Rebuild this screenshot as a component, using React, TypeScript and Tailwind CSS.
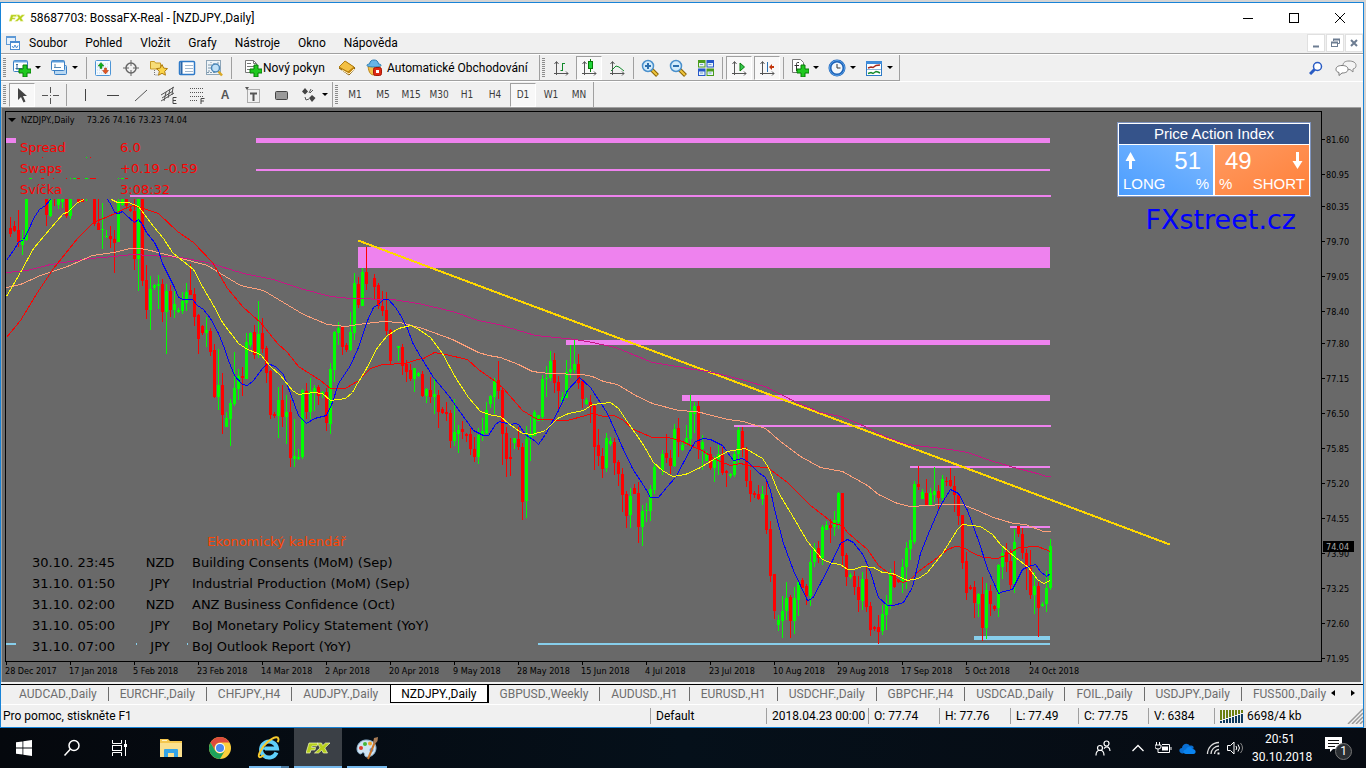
import React from 'react';

interface ZoneItem {
    x: number;
    y: number;
    w: number;
    h: number;
    fill: string;
}

// x, colour, high, body top, body bottom, low
const candleData = `
10 r 217 228 234 237,14 r 221 226 231 232,18 r 210 230 242 247,22 g 230 239 245 255,26 g 199 199 240 241
46 r 199 199 215 226,50 g 199 199 216 217,54 r 199 199 199 206,58 g 199 199 205 209,62 g 199 199 202 208
66 r 199 199 216 218,70 g 199 199 216 219,78 r 199 199 203 203,82 r 199 199 202 202,86 g 199 199 199 201
94 r 199 199 224 226,98 r 199 223 230 230,102 g 203 229 230 249,106 g 230 236 237 238,110 r 226 236 239 248
114 r 230 239 243 273,118 g 199 201 242 242,122 g 199 199 205 206,126 r 199 199 206 208,130 r 207 209 211 212
134 r 199 211 259 270,138 g 199 199 259 291,142 r 199 199 281 286,146 r 265 280 310 319,150 g 276 289 310 330
154 g 284 285 288 290,158 g 275 284 286 309,162 r 279 284 312 322,166 g 284 291 312 354,170 r 285 291 310 317
174 g 291 304 310 318,178 g 308 310 312 313,182 g 292 301 311 314,186 g 283 292 303 311,190 r 264 290 295 295
194 r 288 294 317 326,198 r 314 315 339 354,202 r 325 326 333 335,206 g 317 330 333 347,210 r 328 331 352 356
214 r 344 350 397 398,218 g 349 385 397 410,222 r 373 385 415 434,226 g 412 418 427 427,230 g 399 403 419 446
234 g 352 388 404 406,238 g 369 376 389 400,242 r 367 376 378 396,246 g 333 342 379 379,250 g 332 333 345 347
254 r 325 332 355 359,258 g 301 334 355 358,262 r 318 333 349 353,266 r 346 348 373 383,270 r 370 371 415 419
274 r 412 414 416 418,278 g 387 400 416 438,282 r 385 400 417 427,286 g 395 412 417 444,290 r 400 412 458 467
294 g 419 456 459 467,298 g 449 457 459 460,302 g 389 390 457 459,306 r 383 391 412 419,310 g 378 391 412 419
314 g 385 388 392 411,318 r 385 387 396 405,322 g 391 392 394 398,326 r 388 392 423 431,330 g 363 369 424 434
334 g 331 332 370 382,338 g 322 328 333 345,342 r 326 327 347 355,346 r 343 345 350 352,350 g 312 332 350 351
354 g 273 283 333 340,358 r 277 284 305 308,362 g 268 272 306 306,366 r 247 272 284 290,374 r 274 278 287 299
378 r 283 285 306 309,382 r 291 306 311 316,386 r 292 310 331 335,390 r 329 330 361 364,398 g 346 346 348 361
402 r 344 347 366 375,406 r 360 364 372 382,410 r 364 370 379 381,414 g 368 368 379 392,418 g 372 373 376 377
422 r 371 374 396 397,426 g 388 389 396 403,430 r 377 390 397 403,434 g 379 394 397 414,438 r 390 395 412 428
442 r 407 409 413 414,446 r 402 412 414 421,450 r 410 413 441 448,454 g 399 432 441 446,458 g 425 430 434 453
462 r 421 429 432 439,466 r 433 434 436 442,470 r 428 434 449 455,474 r 437 449 457 462,478 g 428 435 457 464
482 g 418 431 435 441,486 g 402 410 433 434,490 g 395 396 404 408,494 g 378 380 397 414,498 r 361 380 391 399
502 r 388 390 434 465,506 r 427 433 459 477,510 r 438 457 459 476,514 g 438 438 443 449,518 r 427 439 447 450
522 r 443 447 502 520,526 g 426 439 501 518,530 g 417 434 439 461,534 g 410 412 436 436,538 g 415 415 421 421
542 g 375 379 417 421,546 g 366 378 379 397,550 g 351 361 378 381,554 r 353 360 383 393,558 r 376 382 391 412
562 g 392 397 402 402,566 g 360 372 398 398,570 g 345 369 372 378,574 g 340 364 370 373,578 r 354 364 383 389
582 r 379 381 399 408,586 g 398 400 404 405,590 r 395 402 407 423,594 r 405 406 447 470,598 r 429 445 456 466
602 r 448 456 469 478,606 g 433 438 468 472,610 g 437 441 444 446,614 r 438 442 463 475,618 r 460 462 474 486
622 r 468 474 495 512,626 r 491 494 516 528,630 g 488 496 515 528,634 r 484 488 494 494,638 r 482 493 527 543
642 g 505 511 527 546,646 g 503 510 511 522,650 g 485 489 511 521,654 g 464 467 490 494,662 g 450 454 470 475
666 r 434 453 458 463,670 r 450 458 466 474,674 g 424 429 466 467,678 r 418 428 442 457,682 g 441 445 450 451
686 g 425 438 445 445,690 g 395 412 439 447,694 g 402 406 414 433,698 r 401 406 449 459,702 g 435 442 449 470
706 g 451 454 461 461,710 r 447 454 468 470,714 g 456 459 468 482,718 g 445 454 459 475,722 r 447 455 473 475
726 r 470 471 473 487,730 g 473 474 476 478,734 g 451 454 475 477,738 g 427 430 454 465,742 r 427 431 449 457
746 r 447 449 481 487,750 r 470 481 494 502,754 r 491 493 495 498,758 r 485 494 499 500,762 g 486 494 499 505
766 r 482 495 530 534,770 r 521 529 576 582,774 r 574 574 611 619,778 g 615 620 625 631,782 g 596 611 621 638
786 g 582 598 611 620,790 r 595 597 621 638,794 g 587 598 621 634,798 g 580 582 600 616,802 r 578 580 588 588
806 r 584 586 596 605,810 g 550 562 596 606,814 g 543 548 562 567,818 r 541 548 558 563,822 g 525 527 558 565
826 g 521 525 530 530,830 r 519 525 528 543,834 g 511 520 527 536,838 g 492 493 522 529,842 r 493 493 556 568
846 r 553 555 577 586,850 g 573 575 577 579,854 r 571 576 587 595,858 r 576 587 600 612,862 g 572 579 601 610
866 r 567 579 607 612,870 r 602 606 630 636,874 r 626 627 629 631,878 r 615 627 632 644,882 g 605 614 631 635
886 g 595 604 615 630,890 g 569 573 604 609,894 r 561 575 587 588,898 r 579 580 582 583,902 g 559 567 582 593
906 g 542 548 567 589,910 g 530 540 549 560,914 g 481 484 542 544,918 r 466 484 487 490,922 g 489 492 499 499
926 r 479 493 505 505,930 g 488 493 505 506,934 g 467 491 495 502,938 r 485 491 498 509,942 g 475 479 498 501
946 r 477 481 482 486,950 r 468 480 486 487,954 r 476 486 495 512,958 r 493 495 516 525,962 r 515 515 563 569
966 r 552 561 593 600,970 r 585 587 589 590,974 r 581 587 603 618,978 g 593 594 604 617,982 r 577 594 628 641
986 g 583 590 628 639,990 r 585 591 604 616,994 r 605 606 609 611,998 g 564 565 608 617,1002 g 547 553 567 579
1006 r 543 552 562 572,1010 r 549 561 585 589,1014 g 529 542 584 593,1018 r 526 526 534 537,1022 r 528 534 553 559
1026 r 549 553 568 590,1030 r 550 568 595 599,1034 g 572 586 595 614,1038 r 582 586 608 637,1042 g 602 604 606 607
1046 g 571 588 604 612,1050 g 539 546 588 590`;

const candles = candleData.trim().split(/[\n,]/).map((row) => {
    const [x, c, high, top, bottom, low] = row.trim().split(' ');
    return { x: +x, color: c === 'g' ? '#00ff00' : '#ff0000', high: +high, top: +top, bottom: +bottom, low: +low };
});

const averages = [
    {
        color: '#c71585',
        points: ['6,272 27,270 50,264 90,258 113,256 133,254 150,255 180,257 207,262 243,273 273,279 300,288 330,296 350,298 392,299 418,303 452,311 478,320 498,324 535,335 575,339 592,342 615,347 652,362 694,369 712,372 745,380 767,387 790,399 820,412 840,416 860,424 887,437 907,444 950,449 967,452 993,461 1017,468 1037,473 1046,476 1050,476'],
    },
    {
        color: '#ffa07a',
        points: ['6,287 20,284 40,275 67,266 92,255 113,252 130,248 140,248 150,250 177,257 207,265 220,273 240,285 263,290 283,302 303,314 327,324 345,326 365,323 383,321 400,322 422,328 452,339 478,352 488,355 500,357 518,364 532,371 548,373 582,374 592,376 603,381 617,384 635,395 652,403 678,410 694,411 700,412 727,419 743,421 765,428 780,441 800,456 820,467 842,471 867,485 878,494 897,503 910,506 943,504 962,504 977,510 993,517 1013,523 1025,524 1043,531 1050,531'],
    },
    {
        color: '#ff0000',
        points: ['6,337 20,320 37,292 53,268 77,238 93,222 110,215 127,207 133,205 143,208 158,213 177,231 193,242 212,262 227,288 243,307 260,322 277,343 287,352 298,366 320,380 330,388 345,388 358,380 370,368 382,364 405,363 417,359 423,358 434,352 445,354 467,359 478,369 495,381 503,388 522,410 537,419 567,420 585,415 592,413 603,416 613,415 622,419 633,429 652,437 668,437 682,441 694,447 702,450 715,459 730,465 740,463 752,466 767,467 787,482 810,505 823,515 833,523 842,525 847,532 867,549 878,565 890,574 902,582 910,579 918,571 937,557 947,549 955,546 963,547 973,553 983,557 997,558 1007,554 1018,547 1037,546 1050,551'],
    },
    {
        color: '#0000ff',
        points: [
            '6,260 13,250 18,242 23,239 28,230 33,218 39,209 45,205 50,199',
            '107,199 111,205 114,212 118,213 122,211 126,215 134,222 138,219 142,224 146,232 154,242 158,250 162,263 166,271 170,279 174,287 178,297 183,299 192,299 197,305 203,309 210,318 218,333 224,348 228,360 234,375 242,384 247,385 253,380 262,368 267,363 275,366 283,374 290,393 298,415 306,423 314,418 326,415 332,402 338,383 346,371 350,365 358,347 367,320 373,307 378,304 383,299 388,299 395,307 399,313 407,328 412,342 420,356 433,377 448,395 460,412 473,430 483,435 488,435 495,424 499,421 510,424 515,423 518,424 525,434 535,441 538,444 545,434 558,410 567,390 579,377 590,387 607,413 622,447 632,468 645,488 650,497 658,497 667,486 675,477 690,449 695,441 703,438 710,439 722,445 733,460 742,458 748,462 758,472 765,477 770,490 775,513 783,543 793,570 807,600 812,598 820,583 832,560 840,543 847,539 853,542 863,555 870,572 878,597 887,605 893,605 903,602 912,587 920,553 928,533 940,505 950,489 958,493 967,510 978,540 987,568 998,593 1003,591 1012,589 1022,569 1028,566 1035,564 1040,571 1046,576 1050,573',
        ],
    },
    {
        color: '#ffff00',
        points: [
            '6,296 20,272 33,248 50,228 63,213 67,212 77,202 84,199',
            '111,199 117,202 128,202 138,206 153,226 163,238 172,252 178,257 193,269 203,288 213,305 222,322 238,343 247,349 260,354 270,366 280,375 292,390 298,394 313,392 322,393 330,400 345,398 352,392 357,383 365,370 377,347 387,335 398,328 410,325 417,328 430,337 442,353 455,377 468,397 480,411 492,415 500,416 508,423 522,433 532,434 545,430 557,418 568,413 583,410 592,404 610,402 618,408 628,423 642,443 653,462 662,470 672,476 685,474 700,467 713,459 727,451 745,448 762,458 768,467 778,492 790,512 807,541 822,559 832,563 840,564 847,569 853,569 862,566 873,567 882,572 892,573 907,580 918,578 927,572 942,553 957,529 962,524 980,526 992,534 1000,544 1015,557 1028,567 1037,579 1043,583 1050,580',
        ],
    },
];

const zones: ZoneItem[] = [
    { x: 6, y: 138, w: 10, h: 5, fill: '#ee82ee' },
    { x: 256, y: 138, w: 794, h: 5, fill: '#ee82ee' },
    { x: 256, y: 169, w: 794, h: 2, fill: '#ee82ee' },
    { x: 130, y: 195, w: 921, h: 2, fill: '#ee82ee' },
    { x: 358, y: 247, w: 692, h: 21, fill: '#ee82ee' },
    { x: 566, y: 340, w: 484, h: 5, fill: '#ee82ee' },
    { x: 682, y: 395, w: 368, h: 6, fill: '#ee82ee' },
    { x: 734, y: 425, w: 317, h: 2, fill: '#ee82ee' },
    { x: 910, y: 466, w: 140, h: 2, fill: '#ee82ee' },
    { x: 1010, y: 526, w: 40, h: 2, fill: '#ee82ee' },
    { x: 974, y: 636, w: 76, h: 4, fill: '#87ceeb' },
    { x: 538, y: 643, w: 512, h: 2, fill: '#87ceeb' },
    { x: 6, y: 643, w: 10, h: 2, fill: '#87ceeb' },
    { x: 136, y: 643, w: 1, h: 2, fill: '#87ceeb' },
    { x: 187, y: 643, w: 1, h: 2, fill: '#87ceeb' },
];

// bits of candles left between the info lines
const specks: ZoneItem[] = [
    { x: 42, y: 157, w: 1, h: 1, fill: '#ff0000' },
    { x: 86, y: 157, w: 1, h: 1, fill: '#00ff00' },
    { x: 90, y: 157, w: 1, h: 1, fill: '#ff0000' },
    { x: 29, y: 178, w: 3, h: 1, fill: '#00ff00' },
    { x: 41, y: 178, w: 3, h: 1, fill: '#ff0000' },
    { x: 53, y: 178, w: 1, h: 1, fill: '#ff0000' },
    { x: 66, y: 178, w: 1, h: 1, fill: '#ff0000' },
    { x: 70, y: 178, w: 1, h: 1, fill: '#00ff00' },
    { x: 73, y: 178, w: 3, h: 1, fill: '#00ff00' },
    { x: 77, y: 178, w: 3, h: 1, fill: '#ff0000' },
    { x: 85, y: 178, w: 3, h: 1, fill: '#00ff00' },
    { x: 90, y: 178, w: 6, h: 1, fill: '#ff0000' },
    { x: 118, y: 178, w: 1, h: 1, fill: '#00ff00' },
    { x: 121, y: 178, w: 3, h: 1, fill: '#00ff00' },
    { x: 125, y: 178, w: 3, h: 1, fill: '#ff0000' },
];

const prices = ['81.60', '80.95', '80.35', '79.70', '79.05', '78.40', '77.80', '77.15', '76.50', '75.85', '75.20', '74.55', '73.90', '73.25', '72.60', '71.95'];
const priceY = (price: string) => Math.round(139 + (81.6 - Number(price)) * 53.78);

const dates = ['28 Dec 2017', '17 Jan 2018', '5 Feb 2018', '23 Feb 2018', '14 Mar 2018', '2 Apr 2018', '20 Apr 2018', '9 May 2018', '28 May 2018', '15 Jun 2018', '4 Jul 2018', '23 Jul 2018', '10 Aug 2018', '29 Aug 2018', '17 Sep 2018', '5 Oct 2018', '24 Oct 2018'];

const menu = ['Soubor', 'Pohled', 'Vložit', 'Grafy', 'Nástroje', 'Okno', 'Nápověda'];

const frames = ['M1', 'M5', 'M15', 'M30', 'H1', 'H4', 'D1', 'W1', 'MN'];

const tabs = ['AUDCAD.,Daily', 'EURCHF.,Daily', 'CHFJPY.,H4', 'AUDJPY.,Daily', 'NZDJPY.,Daily', 'GBPUSD.,Weekly', 'AUDUSD.,H1', 'EURUSD.,H1', 'USDCHF.,Daily', 'GBPCHF.,H4', 'USDCAD.,Daily', 'FOIL.,Daily', 'USDJPY.,Daily', 'FUS500.,Daily'];

const events = [
    { time: '30.10. 23:45', currency: 'NZD', name: 'Building Consents (MoM) (Sep)' },
    { time: '31.10. 01:50', currency: 'JPY', name: 'Industrial Production (MoM) (Sep)' },
    { time: '31.10. 02:00', currency: 'NZD', name: 'ANZ Business Confidence (Oct)' },
    { time: '31.10. 05:00', currency: 'JPY', name: 'BoJ Monetary Policy Statement (YoY)' },
    { time: '31.10. 07:00', currency: 'JPY', name: 'BoJ Outlook Report (YoY)' },
];

const info = [
    { label: 'Spread', value: '6.0' },
    { label: 'Swaps', value: '+0.19 -0.59' },
    { label: 'Svíčka', value: '3:08:32' },
];

function classNames(...classes: string[]) {
    return classes.filter(Boolean).join(' ')
}

const Icon = ({ children, size = 18 }: { children: React.ReactNode; size?: number }) => (
    <svg width={size} height={size} viewBox={`0 0 ${size} ${size}`} fill="none" className="shrink-0" aria-hidden="true">
        {children}
    </svg>
)

const Caret = () => (
    <svg width="6" height="3" viewBox="0 0 6 3" className="shrink-0" aria-hidden="true">
        <path d="M0 0h6L3 3z" fill="#000" />
    </svg>
)

const Grip = () => (
    <span className="flex w-[7px] shrink-0 items-center justify-center">
        <svg width="3" height="20" viewBox="0 0 3 20" shapeRendering="crispEdges" aria-hidden="true">
            <path d="M1.5 0v20" stroke="#8c8c8c" strokeWidth="3" strokeDasharray="1 1" />
        </svg>
    </span>
)

const Separator = () => (
    <span className="flex w-[5px] shrink-0 items-center justify-center">
        <span className="h-[22px] w-px bg-[#a0a0a0]" />
    </span>
)

const Tool = ({ label, pressed, children }: { label: string; pressed?: boolean; children: React.ReactNode }) => (
    <button
        type="button"
        aria-label={label}
        className={classNames(
            pressed ? 'border-[#a0a0a0] border-r-white border-b-white bg-[#f8f8f8]' : 'border-transparent',
            'mx-px flex h-6 w-[26px] shrink-0 items-center justify-center border'
        )}
    >
        {children}
    </button>
)

const SplitTool = ({ label, children }: { label: string; children: React.ReactNode }) => (
    <button type="button" aria-label={label} className="flex h-6 w-[37px] shrink-0 items-center justify-center gap-1">
        {children}
        <Caret />
    </button>
)

const Plus = () => (
    <path d="M10 6h4v4h4v4h-4v4h-4v-4H6v-4h4z" fill="#1fc91f" stroke="#087a08" strokeWidth="1" />
)

const Axes = () => (
    <path d="M4.5 3v13M2 14.5h14M2.5 5l2-2.5 2 2.5M14 12.5l2 2-2 2" stroke="#555" />
)

const Magnifier = ({ plus }: { plus?: boolean }) => (
    <Icon>
        <path d="M10.5 10.5l6 6" stroke="#8a6508" strokeWidth="4" />
        <path d="M10.5 10.5l5.5 5.5" stroke="#f0c63c" strokeWidth="2" />
        <circle cx="7" cy="7" r="5.5" fill="#d3ecfb" stroke="#4a90cc" strokeWidth="1.5" />
        <path d={plus ? 'M4 7h6M7 4v6' : 'M4 7h6'} stroke="#2c6fae" strokeWidth="2" />
    </Icon>
)

const FxLogo = ({ width, height }: { width: number; height: number }) => (
    <svg width={width} height={height} viewBox="0 0 24 12" aria-hidden="true">
        <path d="M3 1h9l-1 3H6l-.4 1.5h4L9 8H5l-1 3H0z" fill="#b6cf1c" stroke="#f4f9c0" strokeWidth=".7" />
        <path d="M11.5 1h4l1.2 2.5L19.5 1H24l-5.2 5L21.5 11h-4.2l-1.5-2.8L12.5 11H8.5l5.5-5z" fill="#b6cf1c" stroke="#f4f9c0" strokeWidth=".7" />
    </svg>
)

const MainToolbar = () => (
    <div className="flex h-[27px] items-stretch border-b border-white">
        <div className="flex items-center border-r border-b border-[#a0a0a0]">
            <Grip />
            <SplitTool label="Nový graf">
                <Icon>
                    <rect x=".5" y="1.5" width="14" height="11" rx="1" fill="#fff" stroke="#3a7fc4" />
                    <path d="M1 2.5h13" stroke="#6aa7e0" strokeWidth="2" />
                    <path d="M4 5v6M2.5 9.5h7M3 6l1-1 1 1" stroke="#356b9c" />
                    <Plus />
                </Icon>
            </SplitTool>
            <SplitTool label="Profily">
                <Icon>
                    <rect x="4.5" y="6.5" width="12" height="9" rx="1" fill="#b9d8f2" stroke="#3a7fc4" />
                    <rect x="1.5" y="1.5" width="13" height="10" rx="1" fill="#fff" stroke="#3a7fc4" />
                    <path d="M2 2.5h12" stroke="#5b9bd8" strokeWidth="2" />
                    <path d="M4 8.5h7M5 5v3" stroke="#5789b5" />
                </Icon>
            </SplitTool>
            <span className="w-0.5" />
            <Separator />
            <Tool label="Tržní nabídka">
                <Icon>
                    <rect x="1.5" y="1.5" width="15" height="15" rx="1" fill="#f4faff" stroke="#4d95d6" />
                    <path d="M3 5h12M3 8h12M3 11h12M3 14h12" stroke="#c9d9e6" strokeDasharray="1 1" />
                    <path d="M7 3.5l3 3.5H8v2.5H6V7H4z" fill="#0fae1b" stroke="#0a7a12" strokeWidth=".5" />
                    <path d="M11.5 15l3-3.500h-2V9h-2v2.500h-2z" fill="#e4531f" stroke="#a8320a" strokeWidth=".5" />
                </Icon>
            </Tool>
            <Tool label="Datové okno">
                <Icon>
                    <circle cx="9" cy="9" r="5" stroke="#666" strokeWidth="1.5" />
                    <path d="M9 1v6M9 11v6M1 9h6M11 9h6" stroke="#666" />
                </Icon>
            </Tool>
            <Tool label="Navigátor">
                <Icon>
                    <path d="M.5 2.5h4l1 1.5h5v6h-10z" fill="#f7dd78" stroke="#c79a26" />
                    <path d="M4.5 11v5H9" stroke="#777" strokeDasharray="1 1" />
                    <path d="M12 5.5l1.7 3.6 3.8.5-2.8 2.7.7 3.9-3.4-1.9-3.4 1.9.7-3.9-2.8-2.7 3.8-.5z" fill="#fbd54a" stroke="#b07d12" />
                </Icon>
            </Tool>
            <Tool label="Terminál">
                <Icon>
                    <rect x="1.5" y="2.5" width="15" height="13" rx="1" fill="#fff" stroke="#2e7ac8" strokeWidth="1.5" />
                    <path d="M3.5 3v12" stroke="#2a66a8" strokeWidth="2" />
                    <path d="M7 6.5h8M7 9.5h8M7 12.5h8" stroke="#a4b8cc" />
                </Icon>
            </Tool>
            <Tool label="Tester strategií">
                <Icon>
                    <rect x=".5" y="1.5" width="14" height="14" fill="#eef4f8" stroke="#8da5b8" />
                    <path d="M3 13V5M5 10V3M8 9V4M12 8V3M1 13.5h9" stroke="#7f97aa" strokeDasharray="2 1" />
                    <path d="M12 12l4 4.5" stroke="#d9a826" strokeWidth="2.5" />
                    <circle cx="9.5" cy="9" r="4" fill="#bfe0f7" stroke="#4a86b8" strokeWidth="1.5" />
                </Icon>
            </Tool>
            <Separator />
            <button type="button" className="flex h-6 w-[99px] shrink-0 items-center gap-px pl-2.5">
                <Icon>
                    <path d="M1.5 1.5h8l3 3v9h-11z" fill="#fff" stroke="#777" />
                    <path d="M9.5 1.5v3h3M3 4.5h4M3 7.5h7M3 10.5h4" stroke="#777" />
                    <Plus />
                </Icon>
                <span className="whitespace-nowrap">Nový pokyn</span>
            </button>
            <Tool label="MetaEditor">
                <Icon>
                    <path d="M1 9l7-6 9 6-6 7z" fill="#c98a10" stroke="#8a5e05" />
                    <path d="M1 8l6-6 9 6-6 5z" fill="#f3c044" stroke="#b07d12" />
                    <path d="M4 11l7 4 5-5" stroke="#fff3cf" />
                </Icon>
            </Tool>
            <button type="button" className="flex h-6 w-[178px] shrink-0 items-center gap-1 pl-1">
                <Icon>
                    <path d="M3 7c1 8 3 9 7 9s5-3 5-9z" fill="#f2c14b" stroke="#bc8316" />
                    <path d="M4.5 5c.5-3 2-4 4.5-4s4 1 4.5 4c4 .3 4 3-4.5 3S.5 5.3 4.5 5z" fill="#67b5e6" stroke="#2f7fb5" />
                    <rect x="8.5" y="8.5" width="8" height="8" rx="2" fill="#dd2a14" stroke="#a81705" />
                    <rect x="11" y="11" width="3" height="3" fill="#fff" />
                </Icon>
                <span className="whitespace-nowrap">Automatické Obchodování</span>
            </button>
        </div>
        <div className="flex items-center border-r border-b border-[#a0a0a0]">
            <Grip />
            <Tool label="Sloupcový graf">
                <Icon>
                    <Axes />
                    <path d="M10.5 4v8M11 4.5h2M8.5 11.5h2" stroke="#118a2a" />
                </Icon>
            </Tool>
            <Tool label="Svíčkový graf" pressed>
                <Icon>
                    <Axes />
                    <path d="M10.5 0v13" stroke="#087a08" />
                    <rect x="8.5" y="2.5" width="4" height="7" fill="#1fd63a" stroke="#087a08" />
                </Icon>
            </Tool>
            <Tool label="Čárový graf">
                <Icon>
                    <Axes />
                    <path d="M3 12l5-5 3 1 5 4" stroke="#118a2a" />
                </Icon>
            </Tool>
            <Separator />
            <Tool label="Přiblížit"><Magnifier plus /></Tool>
            <Tool label="Oddálit"><Magnifier /></Tool>
            <Tool label="Uspořádat okna">
                <Icon>
                    <rect x="1" y="1" width="7.5" height="7.5" fill="#4a9c1c" />
                    <rect x="9.5" y="1" width="7.5" height="7.5" fill="#2558c9" />
                    <rect x="1" y="9.5" width="7.5" height="7.5" fill="#2558c9" />
                    <rect x="9.5" y="9.5" width="7.5" height="7.5" fill="#4a9c1c" />
                    <path d="M2 4h5.5v3.5H2zM10.5 4H16v3.5h-5.5zM2 12.5h5.5V16H2zM10.5 12.5H16V16h-5.5z" fill="#e8f2fb" />
                    <path d="M3 5.5h3M11.5 5.5h3M3 14h3M11.5 14h3" stroke="#7ba4c7" />
                </Icon>
            </Tool>
            <Separator />
            <Tool label="Automatický posun" pressed>
                <Icon>
                    <Axes />
                    <path d="M10 4v8l4.5-4z" fill="#35c84e" stroke="#087a08" />
                </Icon>
            </Tool>
            <Tool label="Odsazení grafu" pressed>
                <Icon>
                    <Axes />
                    <path d="M9.5 3v10" stroke="#2b6fb0" />
                    <path d="M11 8l3-3v2h2v2h-2v2z" fill="#c2360d" />
                </Icon>
            </Tool>
            <Separator />
            <SplitTool label="Indikátory">
                <Icon>
                    <path d="M1.5.5h8l3 3v10h-11z" fill="#fff" stroke="#777" />
                    <path d="M8 3.5H6.5c-1 0-1 1-1 2V12M3.5 6.5H8" stroke="#333" />
                    <Plus />
                </Icon>
            </SplitTool>
            <SplitTool label="Časový rámec">
                <Icon>
                    <circle cx="9" cy="9" r="7" fill="#f2f7fb" stroke="#1c62b8" strokeWidth="3" />
                    <circle cx="9" cy="9" r="7.5" stroke="#59a0e6" />
                    <path d="M9 5v4h3.5" stroke="#333" />
                </Icon>
            </SplitTool>
            <SplitTool label="Šablony">
                <Icon>
                    <rect x="1.5" y="2.5" width="15" height="14" fill="#fff" stroke="#2e7ac8" />
                    <path d="M1 3.5h16" stroke="#3f8cda" strokeWidth="3" />
                    <path d="M3 9l3-1 2 .5 3-2 4-.5" stroke="#a5281c" strokeWidth="1.5" />
                    <path d="M2 10.5h14" stroke="#8fb6da" />
                    <path d="M3 14.5l3-1 2 1 3-2 2 .5 2 1" stroke="#178a2c" strokeWidth="1.5" />
                </Icon>
            </SplitTool>
            <span className="w-0.5" />
        </div>
        <div className="ml-auto flex items-center gap-3 pr-1.5">
            <button type="button" aria-label="Hledat">
                <Icon size={14}>
                    <path d="M1 13l5-5" stroke="#2a5cc4" strokeWidth="3" />
                    <circle cx="8.5" cy="5.5" r="4" fill="#fff" stroke="#2a5cc4" strokeWidth="1.5" />
                </Icon>
            </button>
            <button type="button" aria-label="Chat">
                <svg width="22" height="16" viewBox="0 0 22 16" aria-hidden="true">
                    <path d="M14 1c4 0 7 1.5 7 4.5 0 2-1 3-3 3.5v3l-3-2.5C10 9.5 8 8 8 5.5 8 2.5 10 1 14 1z" fill="#f4f4f4" stroke="#8a8a8a" />
                    <path d="M7 5.5c4 0 6 1.5 6 3.8 0 2.2-2 3.7-6 3.7l-3 2.5v-3C2 12 1 11 1 9.3 1 7 3 5.5 7 5.5z" fill="#fff" stroke="#777" />
                </svg>
            </button>
        </div>
    </div>
)

const DrawToolbar = () => (
    <div className="flex h-[25px] items-stretch">
        <div className="flex items-center border-r border-[#a0a0a0]">
            <Grip />
            <Tool label="Kurzor" pressed>
                <Icon>
                    <path d="M5 2v12l3-3 2.5 5.5 2-1L10 10h4z" fill="#444" />
                </Icon>
            </Tool>
            <Tool label="Nitkový kříž">
                <Icon>
                    <path d="M9.5 1v6M9.5 12v6M1 9.5h6M12 9.5h6M9 9.5h1" stroke="#555" />
                </Icon>
            </Tool>
            <Separator />
            <span className="w-0.5" />
            <Tool label="Vertikální linie">
                <Icon><path d="M9.5 3v12" stroke="#444" /></Icon>
            </Tool>
            <Tool label="Horizontální linie">
                <Icon><path d="M3 9.5h12" stroke="#444" /></Icon>
            </Tool>
            <Tool label="Trendová linie">
                <Icon><path d="M3 15L15 4" stroke="#555" /></Icon>
            </Tool>
            <Tool label="Ekvidistantní kanál">
                <Icon>
                    <path d="M1 9L14 1M1 15l13-8M4 15l2-9M8 12l2-9M12 9l1-8M2 12l11-7" stroke="#555" />
                    <path d="M16.5 11.5h-3.5v6h3.5M13 14.5h3" stroke="#444" />
                </Icon>
            </Tool>
            <Tool label="Fibonacci">
                <Icon>
                    <path d="M2 2.5h14M2 6.5h14M2 10.5h14M2 14.5h8" stroke="#555" strokeDasharray="1 1" />
                    <path d="M16.5 12.5H13V18M13 15h3" stroke="#444" />
                </Icon>
            </Tool>
            <Tool label="Text">
                <span className="font-['Liberation_Sans',sans-serif] text-xs font-bold text-[#555]">A</span>
            </Tool>
            <Tool label="Textový štítek">
                <Icon>
                    <rect x="3.5" y="3.5" width="12" height="13" stroke="#666" strokeDasharray="1 1" />
                    <path d="M6 7.5h7M9.5 7v8" stroke="#555" strokeWidth="2" />
                    <path d="M1 1h4L3 4z" fill="#555" />
                </Icon>
            </Tool>
            <Tool label="Obdélník">
                <Icon><rect x="3.5" y="5.5" width="12" height="8" rx="1" fill="#999" stroke="#444" /></Icon>
            </Tool>
            <SplitTool label="Šipky">
                <Icon>
                    <path d="M5 2l3 3.5-3 3L2 5.5zM12 9l3.5 3-3.5 4-3-4z" fill="#444" />
                    <path d="M11 3l-2 4M5 11l1 3 3-1M13 4l-3 3" stroke="#555" />
                </Icon>
            </SplitTool>
        </div>
        <div className="flex items-center border-r border-[#a0a0a0] font-['DejaVu_Sans_Condensed','DejaVu_Sans',sans-serif] text-[10px] text-[#3c3c3c]">
            <Grip />
            <span className="w-px" />
            {frames.map((item) => (
                <button
                    key={item}
                    type="button"
                    className={classNames(
                        item === 'D1' ? 'border-[#a0a0a0] border-r-white border-b-white bg-[#f8f8f8]' : 'border-transparent',
                        'mx-px h-6 w-[26px] border text-center'
                    )}
                >
                    {item}
                </button>
            ))}
        </div>
    </div>
)

const PriceIndex = () => (
    <div className="absolute top-2.5 right-2.5 w-[194px] border border-[#7f94bd] bg-white p-px font-['Liberation_Sans',sans-serif] text-[15px] text-white">
        <div className="h-5 bg-[#35538a] text-center leading-5">Price Action Index</div>
        <div className="mt-px grid grid-cols-2 gap-0.5">
            <div className="flex h-[50px] flex-col justify-between bg-gradient-to-bl from-[#7db9ff] to-[#4a9dff] px-1 pt-1 pb-px">
                <div className="flex items-center justify-between pr-2 pl-0.5 text-2xl leading-6">
                    <svg width="11" height="18" viewBox="0 0 11 18" aria-hidden="true">
                        <path d="M5.5 0l5 9H7v8H4V9H.5z" fill="#fff" />
                    </svg>
                    51
                </div>
                <div className="flex justify-between leading-5"><span>LONG</span><span>%</span></div>
            </div>
            <div className="flex h-[50px] flex-col justify-between bg-gradient-to-br from-[#ff9a60] to-[#ff8038] px-1 pt-1 pb-px">
                <div className="flex items-center justify-between pr-0.5 pl-1.5 text-2xl leading-6">
                    49
                    <svg width="11" height="18" viewBox="0 0 11 18" aria-hidden="true">
                        <path d="M5.5 17l-5-8H4V0h3v9h3.5z" fill="#fff" />
                    </svg>
                </div>
                <div className="flex justify-between leading-5"><span>%</span><span>SHORT</span></div>
            </div>
        </div>
    </div>
)

const Chart = () => (
    <main className="flex min-h-0 flex-1 flex-col border-t border-[#a0a0a0] bg-[#696969] pt-[3px] pl-[3px] font-['DejaVu_Sans_Condensed','DejaVu_Sans',sans-serif] text-[9px] text-black">
        <div className="flex min-h-0 flex-1">
            <div className="relative min-w-0 flex-1 overflow-hidden border border-black">
                <svg width="1315" height="549" viewBox="6 112 1315 549" shapeRendering="crispEdges" className="block max-w-none" role="img" aria-label="NZDJPY">
                    {zones.map((z, i) => (
                        <rect key={i} x={z.x} y={z.y} width={z.w} height={z.h} fill={z.fill} />
                    ))}
                    {specks.map((z, i) => (
                        <rect key={i} x={z.x} y={z.y} width={z.w} height={z.h} fill={z.fill} />
                    ))}
                    <path d="M358 240.5L1170 544.5" stroke="#ffd700" strokeWidth="2" />
                    {candles.map((c) => (
                        <g key={c.x} fill={c.color}>
                            <rect x={c.x} y={c.high} width="1" height={c.low - c.high} />
                            <rect x={c.x - 1} y={c.top} width="3" height={c.bottom - c.top} />
                        </g>
                    ))}
                    <g transform="translate(0.5 0.5)" fill="none">
                        {averages.map((line) => line.points.map((points) => (
                            <polyline key={points} points={points} stroke={line.color} />
                        )))}
                    </g>
                </svg>

                <div className="absolute top-0.5 left-0.5 flex items-center gap-1 leading-3">
                    <svg width="8" height="4" viewBox="0 0 8 4" className="mr-px" aria-hidden="true"><path d="M0 0h8L4 4z" /></svg>
                    <span className="mr-2">NZDJPY.,Daily</span>
                    <span>73.26 74.16 73.23 74.04</span>
                </div>

                <dl className="absolute top-[25px] left-3.5 grid grid-cols-[100px_auto] font-['DejaVu_Sans',sans-serif] text-[13px] leading-[21px] text-[#ff0000]">
                    {info.map((item) => (
                        <React.Fragment key={item.label}>
                            <dt>{item.label}</dt>
                            <dd>{item.value}</dd>
                        </React.Fragment>
                    ))}
                </dl>

                <table className="absolute top-[419px] left-[26px] font-['DejaVu_Sans',sans-serif] text-[13px] leading-[21px]">
                    <caption className="pl-[92px] text-center text-[#ff4500]">Ekonomický kalendář</caption>
                    <tbody>
                        {events.map((item) => (
                            <tr key={item.time}>
                                <td className="w-28 p-0 whitespace-nowrap">{item.time}</td>
                                <td className="w-8 p-0 text-center">{item.currency}</td>
                                <td className="p-0 pl-4 whitespace-nowrap">{item.name}</td>
                            </tr>
                        ))}
                    </tbody>
                </table>

                <PriceIndex />
                <a href="#fxstreet" className="absolute top-[90px] right-[25px] font-['DejaVu_Sans',sans-serif] text-[27px] leading-9 text-[#0000ff]">FXstreet.cz</a>
            </div>
            <svg width="39" height="551" viewBox="1322 111 39 551" className="shrink-0 overflow-visible">
                {prices.map((price) => (
                    <g key={price}>
                        <rect x="1322" y={priceY(price)} width="3" height="1" />
                        <text x="1326" y={priceY(price) + 4}>{price}</text>
                    </g>
                ))}
                <rect x="1323" y="541" width="31" height="11" />
                <text x="1326" y="550" fill="#a8a8a8">74.04</text>
            </svg>
        </div>
        <div className="flex h-5 overflow-hidden leading-3">
            {dates.map((date) => (
                <div key={date} className="w-16 shrink-0 whitespace-nowrap">
                    <span className="ml-px block h-[3px] w-px bg-black" />
                    {date}
                </div>
            ))}
        </div>
    </main>
)

const TaskItem = ({ label, active, children }: { label: string; active?: boolean; children: React.ReactNode }) => (
    <button
        type="button"
        aria-label={label}
        className={classNames(active ? 'bg-[#3b4046]' : '', 'flex h-10 w-12 shrink-0 items-center justify-center')}
    >
        {children}
    </button>
)

const Taskbar = () => (
    <footer className="flex h-10 shrink-0 items-center bg-gradient-to-r from-[#05080d] via-[#05101a] to-[#070b12] text-white">
        <TaskItem label="Start">
            <svg width="16" height="16" viewBox="0 0 16 16" fill="#fff" aria-hidden="true">
                <path d="M0 2.3l6.5-.9v6.2H0zM7.3 1.3L16 0v7.6H7.3zM0 8.4h6.5v6.2L0 13.7zM7.3 8.4H16V16l-8.7-1.3z" />
            </svg>
        </TaskItem>
        <TaskItem label="Hledat">
            <svg width="18" height="18" viewBox="0 0 18 18" fill="none" stroke="#fff" strokeWidth="1.5" aria-hidden="true">
                <circle cx="11" cy="6.5" r="5" />
                <path d="M7.5 10L1.5 16.5" />
            </svg>
        </TaskItem>
        <TaskItem label="Zobrazení úkolů">
            <svg width="18" height="16" viewBox="0 0 18 16" fill="none" stroke="#fff" aria-hidden="true">
                <path d="M1.5 0v3.5h9V0M1.5 16v-3.5h9V16M14.5 0v16" />
                <rect x="1.5" y="5.5" width="9" height="5" />
                <rect x="13" y="4" width="3" height="3" fill="#fff" stroke="none" />
            </svg>
        </TaskItem>
        <div className="ml-[3px] flex gap-px">
            <TaskItem label="Průzkumník souborů">
                <svg width="22" height="18" viewBox="0 0 22 18" aria-hidden="true">
                    <path d="M0 0h8l2 2h12v16H0z" fill="#f5c74f" />
                    <path d="M0 4h22v14H0z" fill="#fbe08e" />
                    <path d="M2 1.5h5" stroke="#fff3c4" />
                    <path d="M4 18v-7q0-1 1-1h12q1 0 1 1v7h-4v-4H8v4z" fill="#35a4e6" />
                </svg>
            </TaskItem>
            <TaskItem label="Chrome">
                <svg width="22" height="22" viewBox="0 0 22 22" aria-hidden="true">
                    <circle cx="11" cy="11" r="11" fill="#fbce3c" />
                    <path d="M1.5 5.5A11 11 0 0 1 20.5 5.5H11a5.5 5.5 0 0 0-4.8 8.2z" fill="#dd4b3c" />
                    <path d="M1.5 5.5A11 11 0 0 0 11 22l4.8-8.3a5.5 5.5 0 0 1-9.6 0z" fill="#1da25c" />
                    <circle cx="11" cy="11" r="5" fill="#fff" />
                    <circle cx="11" cy="11" r="4" fill="#4a88ef" />
                </svg>
            </TaskItem>
            <div className="relative">
                <TaskItem label="Internet Explorer">
                    <svg width="24" height="24" viewBox="0 0 24 24" fill="none" aria-hidden="true">
                        <path d="M19.5 16.5A8 8 0 1 1 20 12.5H8" stroke="#5fd0fa" strokeWidth="4" />
                        <path d="M20 12.5H5" stroke="#5fd0fa" strokeWidth="2.5" />
                        <path d="M7 19c-5 4-6.5 2-4-3C6 9 14 2 19 1.2c3-.3 3 3 1.5 5" stroke="#f6c92d" strokeWidth="2" />
                    </svg>
                </TaskItem>
                <span className="absolute bottom-0 left-1 flex h-0.5 w-10 bg-[#76b9ed]"><span className="ml-auto w-2 bg-[#4b7ba3]" /></span>
            </div>
            <div className="relative">
                <TaskItem label="BossaFX" active>
                    <FxLogo width={24} height={12} />
                </TaskItem>
                <span className="absolute bottom-0 left-0 h-0.5 w-12 bg-[#76b9ed]" />
            </div>
            <div className="relative">
                <TaskItem label="Malování">
                    <svg width="24" height="24" viewBox="0 0 24 24" aria-hidden="true">
                        <path d="M11 4c6 0 10 3 10 8s-4 9-9 9c-3 0-2-3-3-4s-2 0-3 1c-2 0-4-2-4-5 0-5 4-9 9-9z" fill="#cfe4f3" stroke="#8fb4d0" />
                        <circle cx="6" cy="12" r="2" fill="#e03b2c" />
                        <circle cx="10" cy="8" r="2" fill="#45b53b" />
                        <circle cx="15" cy="7.5" r="2" fill="#f2a531" />
                        <circle cx="16.5" cy="14" r="2" fill="#5a8ed8" />
                        <path d="M13 23l6.5-16" stroke="#c9742a" strokeWidth="2" />
                        <path d="M18 7l1-5 4-1-.5 4-2.5 3z" fill="#a77b56" />
                    </svg>
                </TaskItem>
                <span className="absolute bottom-0 left-1 h-0.5 w-10 bg-[#76b9ed]" />
            </div>
        </div>

        <div className="ml-auto flex items-center pr-3.5">
            <button type="button" aria-label="Lidé" className="mr-5">
                <svg width="16" height="16" viewBox="0 0 16 16" fill="none" stroke="#fff" strokeWidth="1.2" aria-hidden="true">
                    <circle cx="11.5" cy="3.5" r="2.5" />
                    <circle cx="5" cy="8" r="2.5" />
                    <path d="M1 15.5c0-7 8-7 8 0M9 8.5c3-3.5 6-1 6 2.5" />
                </svg>
            </button>
            <button type="button" aria-label="Skryté ikony" className="mr-2.5">
                <svg width="14" height="8" viewBox="0 0 14 8" fill="none" stroke="#fff" strokeWidth="1.3" aria-hidden="true"><path d="M1.5 7L7 1.5 12.5 7" /></svg>
            </button>
            <svg width="17" height="12" viewBox="0 0 17 12" fill="none" stroke="#fff" aria-hidden="true">
                <path d="M1.5 0v3M4.5 0v3M0 3h6v2q0 2-3 2t-3-2zM3 7v3.5h3" />
                <path d="M7 2.5h7.5v8H6" />
                <rect x="7" y="4.5" width="6" height="4" fill="#fff" stroke="none" />
                <path d="M16 5v3" />
            </svg>
            <svg width="17" height="11" viewBox="0 0 17 11" className="ml-[7px]" aria-hidden="true">
                <path d="M4 10.5H3C-.5 10-.5 5 3 5c0-4.5 6-6 7.8-2.2C14 2 15 4 14.5 5.5" fill="#0a6ed1" />
                <path d="M7 11c-3.5 0-3.5-4.5 0-4.5C8 3 12.5 3 13 6c4-.5 5 4.5 1.5 5z" fill="#0a84f0" />
            </svg>
            <svg width="14" height="14" viewBox="0 0 14 14" fill="none" stroke="#ddd" strokeWidth="1.3" className="ml-2.5" aria-hidden="true">
                <path d="M1.5 13A11.5 11.5 0 0 1 13 1.5M5 13a8 8 0 0 1 8-8M8.5 13A4.5 4.5 0 0 1 13 8.5" />
                <path d="M11.5 13.5v-2h2v2z" fill="#fff" stroke="none" />
            </svg>
            <svg width="17" height="14" viewBox="0 0 17 14" fill="none" stroke="#fff" className="ml-[7px]" aria-hidden="true">
                <path d="M.5 4.5h3l3.5-3.5v12L3.5 9.5h-3z" />
                <path d="M9 5q1.5 2 0 4M11 3.5q3 3.5 0 7" />
                <path d="M13.5 2q4 5 0 10" stroke="#888" />
            </svg>
            <time className="ml-2 block w-[56px] text-center text-xs leading-[18px]">
                20:51<br />30.10.2018
            </time>
            <button type="button" aria-label="Oznámení" className="relative ml-4 h-6 w-7">
                <svg width="28" height="24" viewBox="0 0 28 24" aria-hidden="true">
                    <path d="M1 1h17v12H9l-3 3v-3H1z" fill="#fff" />
                    <path d="M4 4.5h11M4 7.5h11M4 10.5h7" stroke="#111" />
                </svg>
                <span className="absolute right-0 bottom-0 h-[17px] w-[17px] rounded-full border border-[#777] bg-[#2b2f33] text-center text-xs leading-[15px]">1</span>
            </button>
        </div>
    </footer>
)

const App = () => {
    return (
        <div className="flex h-screen min-h-[480px] flex-col overflow-hidden bg-[#d4d4d4] font-['Roboto','Noto_Sans',sans-serif] text-xs text-black">
            <div className="mt-0.5 mr-0.5 flex min-h-0 flex-1 flex-col border border-[#1883d7] bg-[#f0f0f0]">

                {/* TITLE BAR */}
                <header className="flex h-[30px] shrink-0 items-center bg-white pl-2">
                    <FxLogo width={16} height={8} />
                    <h1 className="ml-[5px]">58687703: BossaFX-Real - [NZDJPY.,Daily]</h1>
                    <div className="ml-auto flex">
                        <button type="button" aria-label="Minimalizovat" className="flex w-[46px] justify-center">
                            <Icon size={12}><path d="M1 6.5h10" stroke="#000" /></Icon>
                        </button>
                        <button type="button" aria-label="Maximalizovat" className="flex w-[46px] justify-center">
                            <Icon size={12}><rect x="1.5" y="1.5" width="9" height="9" stroke="#000" /></Icon>
                        </button>
                        <button type="button" aria-label="Zavřít" className="flex w-[46px] justify-center">
                            <Icon size={12}><path d="M1 1l10 10M11 1L1 11" stroke="#000" /></Icon>
                        </button>
                    </div>
                </header>

                {/* MENU */}
                <nav className="flex h-[21px] shrink-0 items-center border-b border-[#a0a0a0] pl-[5px]">
                    <Icon size={14}>
                        <rect x=".5" y=".5" width="9" height="8" fill="#e6f1fb" stroke="#5f9ad6" />
                        <path d="M1 1.5h8" stroke="#5f9ad6" />
                        <rect x="4.5" y="5.5" width="9" height="8" fill="#fff" stroke="#4b8bd0" />
                        <path d="M5 6.5h8" stroke="#4b8bd0" />
                        <path d="M6 10l1.5 2L9 9l1.5 3L12 9.5" stroke="#4b8bd0" />
                    </Icon>
                    {menu.map((item) => (
                        <button key={item} type="button" className="px-[9px]">{item}</button>
                    ))}
                    <div className="ml-auto flex gap-px">
                        <button type="button" aria-label="Minimalizovat graf" className="border border-[#e0e0e0] bg-white">
                            <Icon size={16}><path d="M5 11.5h6" stroke="#6d7d92" strokeWidth="2" /></Icon>
                        </button>
                        <button type="button" aria-label="Obnovit graf" className="border border-[#e0e0e0] bg-white">
                            <Icon size={16}>
                                <path d="M6.5 6V4.5h6v4H11" stroke="#6d7d92" />
                                <path d="M6 4.5h7M4 7.5h7" stroke="#6d7d92" strokeWidth="2" />
                                <rect x="4.5" y="7.5" width="6" height="4" stroke="#6d7d92" />
                            </Icon>
                        </button>
                        <button type="button" aria-label="Zavřít graf" className="border border-[#e0e0e0] bg-white">
                            <Icon size={16}><path d="M5 5l6 6M11 5l-6 6" stroke="#6d7d92" strokeWidth="2" /></Icon>
                        </button>
                    </div>
                </nav>

                {/* TOOLBARS */}
                <div className="shrink-0 border-t border-white">
                    <MainToolbar />
                    <DrawToolbar />
                </div>

                {/* CHART */}
                <div className="flex min-h-0 flex-1 border-l border-[#a0a0a0] pr-0.5">
                    <div className="flex min-w-0 flex-1 flex-col"><Chart /></div>
                </div>

                {/* CHART TABS */}
                <div className="mt-0.5 flex h-5 shrink-0 border-t border-black pl-px">
                    <div className="flex min-w-0 flex-1 overflow-hidden pl-1.5 text-[#6d6d6d]">
                        {tabs.map((item) => (
                            item === 'NZDJPY.,Daily' ? (
                                <button key={item} type="button" className="h-[18px] shrink-0 border-r-2 border-b border-l border-black bg-white px-2.5 leading-4 text-black">{item}</button>
                            ) : (
                                <button key={item} type="button" className="flex h-[18px] shrink-0 items-center pl-[11px] leading-4">
                                    {item}
                                    <span className={classNames(item === 'AUDJPY.,Daily' || item === 'FUS500.,Daily' ? 'bg-transparent' : 'bg-[#6d6d6d]', 'ml-[11px] h-3.5 w-px')} />
                                </button>
                            )
                        ))}
                    </div>
                    <div className="flex w-[34px] items-center justify-between pr-2 pb-1 pl-0.5">
                        <button type="button" aria-label="Předchozí"><svg width="4" height="6" viewBox="0 0 4 6"><path d="M4 0v6L0 3z" /></svg></button>
                        <button type="button" aria-label="Další"><svg width="4" height="6" viewBox="0 0 4 6"><path d="M0 0v6l4-3z" /></svg></button>
                    </div>
                </div>

                {/* STATUS BAR */}
                <div className="flex h-[23px] shrink-0 items-center border-t border-white pl-0.5 whitespace-nowrap">
                    <span className="flex-1">Pro pomoc, stiskněte F1</span>
                    <span className="w-[116px] border-l border-[#a0a0a0] pl-[5px]">Default</span>
                    <span className="w-[102px] border-l border-[#a0a0a0] pl-[5px]">2018.04.23 00:00</span>
                    <span className="w-[71px] border-l border-[#a0a0a0] pl-[5px]">O: 77.74</span>
                    <span className="w-[71px] border-l border-[#a0a0a0] pl-[5px]">H: 77.76</span>
                    <span className="w-[68px] border-l border-[#a0a0a0] pl-[5px]">L: 77.49</span>
                    <span className="w-[70px] border-l border-[#a0a0a0] pl-[5px]">C: 77.75</span>
                    <span className="w-[66px] border-l border-[#a0a0a0] pl-[5px]">V: 6384</span>
                    <span className="flex w-[149px] items-center gap-1 border-l border-[#a0a0a0] pl-[5px]">
                        <svg width="23" height="13" viewBox="0 0 23 13" shapeRendering="crispEdges" aria-hidden="true">
                            {[0, 1, 2, 3, 4, 5, 6, 7].map((n) => (
                                <g key={n}>
                                    <rect x={n * 3} y="0" width="2" height={10 - n} fill="#6b7f10" />
                                    <rect x={n * 3} y={11 - n} width="2" height={2 + n} fill="#0e3a5e" />
                                </g>
                            ))}
                        </svg>
                        6698/4 kb
                        <svg width="16" height="16" viewBox="0 0 16 16" className="ml-auto self-end" aria-hidden="true">
                            <path d="M1 16L16 1M5 16L16 5M9 16l7-7M13 16l3-3" stroke="#9a9a9a" strokeWidth="1.5" />
                        </svg>
                    </span>
                </div>
            </div>
            <Taskbar />
        </div>
    )
}

export default App;
